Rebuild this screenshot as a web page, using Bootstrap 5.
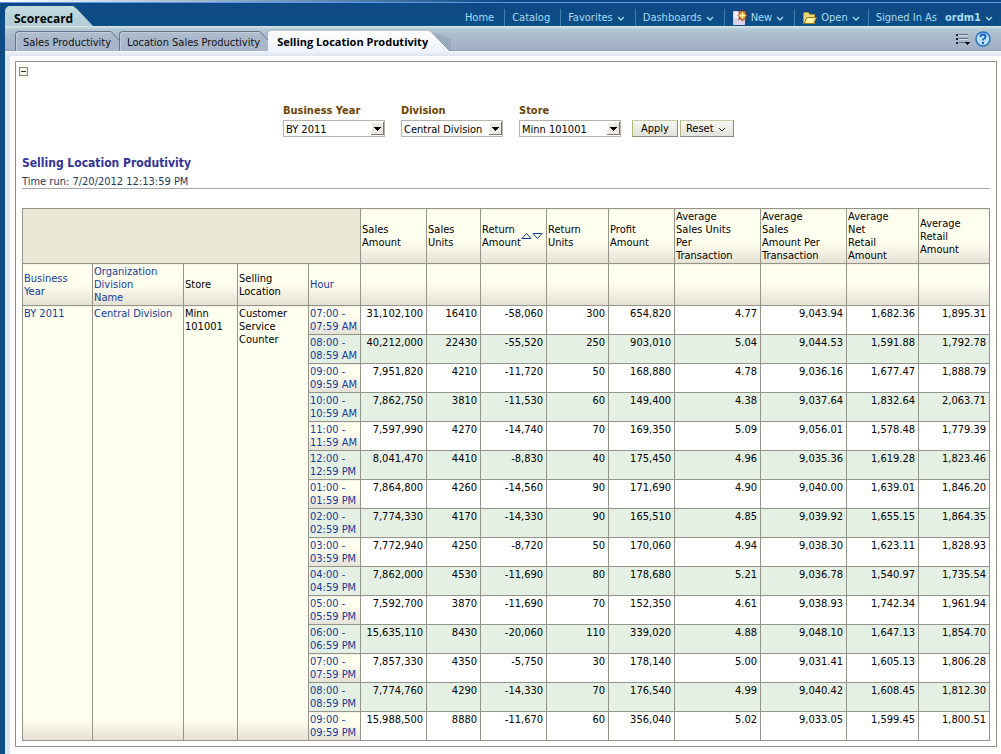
<!DOCTYPE html>
<html lang="en">
<head>
<meta charset="utf-8">
<meta name="viewport" content="width=device-width, initial-scale=1">
<title>Scorecard</title>
<link href="https://cdn.jsdelivr.net/npm/bootstrap@5.3.0/dist/css/bootstrap.min.css" rel="stylesheet">
<style>
body { font: 11px/13px "DejaVu Sans Condensed", "DejaVu Sans", sans-serif; color: #000; background: #fff; }
a { text-decoration: none; }
.shell { background: linear-gradient(90deg, #0d4a86 5px, #fff 5px); min-height: 100vh; }
.topbar { height: 26px; padding-left: 5px;
  background: linear-gradient(90deg, #fff, #0d4a86 50%) 0 0 / 100% 2px no-repeat, linear-gradient(#5b97e8, #5b97e8) 0 2px / 100% 1px no-repeat, linear-gradient(#0d4a86 16px, #0b4f87); }
.board-tab { height: 20px; padding: 0 26px 0 9px; font: bold 12px/25px "Open Sans", "DejaVu Sans", sans-serif; color: #000; border-radius: 5px 0 0 0; background: linear-gradient(#c3dbe0, #b2ccd6); clip-path: polygon(0 0, 68px 0, 72px 3px, 100% 100%, 0 100%); width: 88px; white-space: nowrap; }
.menu-item { height: 17px; line-height: 17px; padding: 0 10px 0 7px; color: #a9dcf0; border: 0; border-left: 1px solid #3f7fab; background: none; white-space: nowrap; display: flex; align-items: center; }
.menu-item.first { border-left: 0; }
.menu-item:hover { color: #fff; }
.tabstrip { height: 25px; margin-left: 5px; padding-left: 10px; background: linear-gradient(#dbe7e9, #b5c9d4 3px, #aabccc 9px, #a3b1c5 23px, #8f9bb3); }
.sub-tab { height: 20px; line-height: 22px; color: #111; border: 1px solid #66758d; border-width: 1px 0 0 1px; border-radius: 4px 0 0 0; background: linear-gradient(#adbccd, #a5b2c8); padding-left: 7px; white-space: nowrap; box-shadow: inset 1px 1px #c3cedb; }
.sub-tab.current { background: linear-gradient(#fff, #eef2f9); border: 0; font: bold 11px/22px "Open Sans", "DejaVu Sans", sans-serif; color: #000; box-shadow: none; padding-left: 9px; }
.under { height: 5px; margin-left: 5px; border-radius: 4px 0 0 0; background: linear-gradient(#f1f4fb, #dbe4f0); }
.strip-tools { padding-right: 10px; }
.content-area { border-left: 5px solid #dde5f1; margin-left: 5px; padding: 5px 4px 7px 5px; }
.report { border: 1px solid #8f8f86; padding: 4px 6px 5px 6px; }
.expander { width: 9px; height: 9px; padding: 0; border: 1px solid #84847a; background: #f6f6e8; display: flex; align-items: center; justify-content: center; margin: 1px 0 0 -3px; }
.prompt-label { font-weight: bold; line-height: 14px; color: #6b4500; display: block; margin-bottom: 2px; }
.prompts { padding: 28px 0 0 261px; }
.prompt-box { width: 102px; height: 17px; padding: 1px 14px 0 2px; font: inherit; border: 1px solid #b4b4aa; border-radius: 0; appearance: none; color: #000;
  background: #fff url("data:image/svg+xml,%3Csvg xmlns='http://www.w3.org/2000/svg' width='13' height='13' shape-rendering='crispEdges'%3E%3Cpath fill='%23eceae2' d='M0 0h13v13H0z'/%3E%3Cpath fill='%23fff' d='M0 0h12v1H1v11H0z'/%3E%3Cpath fill='%23777' d='M12 0h1v13H0v-1h12z'/%3E%3Cpath d='M3 5h7v1H9v1H8v1H7v1H6V8H5V7H4V6H3z'/%3E%3C/svg%3E") no-repeat right 0 top 1px; }
.push { height: 17px; padding: 0 8px; border: 1px solid; border-color: #c9c9a8 #8c8c80 #8c8c80 #b5b57c; background: linear-gradient(#f7f7f2, #e2e2da); line-height: 15px; color: #000; }
.push.reset { padding: 0 6px 0 5px; margin-left: 2px; }
.prompt-actions { margin-left: 11px; }
.report-title { font: bold 12px/16px "DejaVu Sans Condensed", "DejaVu Sans", sans-serif; color: #333399; margin: 18px 0 2px; }
.run-time { color: #1d3a5c; height: 16px; line-height: 17px; border-bottom: 1px solid #a3a7ae; }
.pivot { width: 100%; margin-top: 19px; table-layout: fixed; border-collapse: collapse; }
.pivot th, .pivot td { border: 1px solid #94948a; padding: 1px; font-weight: normal; vertical-align: middle; text-align: left; }
.pivot td { text-align: right; vertical-align: top; padding-right: 3px; background: #fff; }
.pivot th { background: linear-gradient(#fffff0, #fffff0 calc(100% - 22px), #e4e1d4); white-space: nowrap; }
.pivot tbody th { vertical-align: top; }
.pivot th.corner { background: #e9e9d5; }
.pivot th.hour { background: linear-gradient(#fffff0, #fffff0 calc(100% - 18px), #e4e1d6); color: #15399b; }
.pivot tr:nth-child(even) td, .pivot tbody tr:nth-child(even) th.hour { background: #e5f0e4; }
.pivot a { color: #15399b; }
</style>
</head>
<body>
<div class="shell">
  <header class="topbar d-flex align-items-end">
    <a class="board-tab" href="#">Scorecard</a>
    <nav class="d-flex ms-auto align-items-end">
      <a class="menu-item first" href="#">Home</a>
      <a class="menu-item" href="#">Catalog</a>
      <button class="menu-item">Favorites<svg class="ms-1" width="8" height="9"><path d="M1 4l3 3 3-3" fill="none" stroke="#a9dcf0" stroke-width="1.3"/></svg></button>
      <button class="menu-item">Dashboards<svg class="ms-1" width="8" height="9"><path d="M1 4l3 3 3-3" fill="none" stroke="#a9dcf0" stroke-width="1.3"/></svg></button>
      <button class="menu-item"><svg class="me-1" width="15" height="16"><path d="M1.500 1.500h11v13h-11z" fill="#f5f2fb" stroke="#d9cfe8"/><path d="M2 9l10-4v9H2z" fill="#ddd0ea"/><path d="M10.500 0l1.200 2.200 2.600-.7-.8 2.500 1.500 1.500-1.500 1.500.8 2.500-2.600-.7-1.200 2.200-1.200-2.200-2.600.7.8-2.500L6 5.500 7.500 4l-.8-2.500 2.600.7z" fill="#e5a12b" stroke="#8b250e" stroke-width=".8"/><path d="M10.500 2.500v6M7.500 5.500h6" stroke="#fff8a8" stroke-width="1.400"/></svg>New<svg class="ms-1" width="8" height="9"><path d="M1 4l3 3 3-3" fill="none" stroke="#a9dcf0" stroke-width="1.3"/></svg></button>
      <button class="menu-item pe-2"><svg class="me-1" width="15" height="14"><path d="M1.500 12.500v-10l1-1h4l1 2h5v9z" fill="#e9d77a" stroke="#b49a35"/><path d="M2 12.500l3-6h9.500l-3 6z" fill="#fff5a9" stroke="#8f781e"/></svg>Open<svg class="ms-1" width="8" height="9"><path d="M1 4l3 3 3-3" fill="none" stroke="#a9dcf0" stroke-width="1.3"/></svg></button>
      <button class="menu-item pe-2">Signed In As<b class="ms-2">ordm1</b><svg class="ms-1" width="8" height="9"><path d="M1 4l3 3 3-3" fill="none" stroke="#a9dcf0" stroke-width="1.3"/></svg></button>
    </nav>
  </header>
  <div class="tabstrip d-flex align-items-end">
    <a class="sub-tab" href="#">Sales Productivity</a><svg width="8" height="20"><path d="M0 .5L8 9v11H0z" fill="#a8b6ca"/><path d="M0 .5L8 9" stroke="#66758d"/></svg>
    <a class="sub-tab" href="#">Location Sales Productivity</a><svg width="8" height="20"><path d="M0 .5L8 9v11H0z" fill="#a8b6ca"/><path d="M0 .5L8 9" stroke="#66758d"/></svg>
    <a class="sub-tab current" href="#">Selling Location Produtivity</a><svg width="23" height="20"><defs><linearGradient id="g" x2="0" y2="1"><stop stop-color="#fff"/><stop offset="1" stop-color="#eef2f9"/></linearGradient></defs><path d="M4 1l19 19V8z" fill="#8798ac" opacity=".4"/><path d="M0 0q3 0 5 2l17 18H0z" fill="url(#g)"/><path d="M3 .5l19 19.500" stroke="#75879d"/></svg>
    <div class="strip-tools ms-auto align-self-center d-flex align-items-center gap-1">
      <button class="border-0 bg-transparent p-0 d-flex" aria-label="Page options"><svg width="16" height="14" shape-rendering="crispEdges"><path d="M4 2.500h9M4 6.500h9M4 10.500h6" stroke="#666e78"/><path d="M4 3.500h9M4 7.500h9" stroke="#d5dee8"/><path d="M1 2.500h2M1 6.500h2M1 10.500h2" stroke="#223" stroke-width="2"/><path d="M9 10h6l-3 3z"/></svg></button>
      <button class="border-0 bg-transparent p-0 d-flex" aria-label="Help"><svg width="16" height="16"><circle cx="8" cy="8" r="7" fill="#b9e0fb" stroke="#2471c4" stroke-width="1.500"/><path d="M5.500 6q0-2.500 2.500-2.500t2.500 2.200Q10.500 7 9 7.700 8 8.200 8 9.600" fill="none" stroke="#125dbd" stroke-width="1.800"/><path d="M7 11h2v2H7z" fill="#125dbd"/></svg></button>
    </div>
  </div>
  <div class="under"></div>
  <main class="content-area">
    <section class="report">
      <button class="expander" aria-label="Collapse section"><svg width="5" height="1" class="flex-shrink-0"><path d="M0 0h5v1H0z" fill="#333"/></svg></button>
      <form class="prompts d-flex align-items-end">
        <div class="me-3"><label class="prompt-label" for="year">Business Year</label><select class="prompt-box" id="year"><option>BY 2011</option></select></div>
        <div class="me-3"><label class="prompt-label" for="division">Division</label><select class="prompt-box" id="division"><option>Central Division</option></select></div>
        <div><label class="prompt-label" for="store">Store</label><select class="prompt-box" id="store"><option>Minn 101001</option></select></div>
        <div class="prompt-actions d-flex">
          <button type="button" class="push">Apply</button>
          <button type="button" class="push reset">Reset<svg class="ms-1" width="9" height="7"><path d="M1 2l3 3 3-3" fill="none" stroke="#222"/></svg></button>
        </div>
      </form>
      <h1 class="report-title">Selling Location Produtivity</h1>
      <div class="run-time">Time run: 7/20/2012 12:13:59 PM</div>
      <table class="pivot">
        <colgroup><col style="width:70px"><col style="width:91px"><col style="width:54px"><col style="width:71px"><col style="width:52px"><col style="width:66px"><col style="width:54px"><col style="width:66px"><col style="width:62px"><col style="width:66px"><col style="width:86px"><col style="width:86px"><col style="width:72px"><col style="width:71px"></colgroup>
        <thead>
          <tr>
            <th class="corner" colspan="5"></th>
            <th>Sales<br>Amount</th><th>Sales<br>Units</th>
            <th><div class="d-flex align-items-center">Return<br>Amount<svg width="23" height="8"><path d="M1 6.500h9L5.500 1.500zM12 1.500h9l-4.500 5z" fill="none" stroke="#15399b"/></svg></div></th>
            <th>Return<br>Units</th><th>Profit<br>Amount</th>
            <th>Average<br>Sales Units<br>Per<br>Transaction</th><th>Average<br>Sales<br>Amount Per<br>Transaction</th>
            <th>Average<br>Net<br>Retail<br>Amount</th><th>Average<br>Retail<br>Amount</th>
          </tr>
          <tr>
            <th><a href="#">Business<br>Year</a></th><th><a href="#">Organization<br>Division<br>Name</a></th><th>Store</th><th>Selling<br>Location</th><th><a href="#">Hour</a></th>
            <th></th><th></th><th></th><th></th><th></th><th></th><th></th><th></th><th></th>
          </tr>
        </thead>
        <tbody id="rows"></tbody>
      </table>
    </section>
  </main>
</div>
<script>
const data = `07:00 AM|31,102,100|16410|-58,060|300|654,820|4.77|9,043.94|1,682.36|1,895.31
08:00 AM|40,212,000|22430|-55,520|250|903,010|5.04|9,044.53|1,591.88|1,792.78
09:00 AM|7,951,820|4210|-11,720|50|168,880|4.78|9,036.16|1,677.47|1,888.79
10:00 AM|7,862,750|3810|-11,530|60|149,400|4.38|9,037.64|1,832.64|2,063.71
11:00 AM|7,597,990|4270|-14,740|70|169,350|5.09|9,056.01|1,578.48|1,779.39
12:00 PM|8,041,470|4410|-8,830|40|175,450|4.96|9,035.36|1,619.28|1,823.46
01:00 PM|7,864,800|4260|-14,560|90|171,690|4.90|9,040.00|1,639.01|1,846.20
02:00 PM|7,774,330|4170|-14,330|90|165,510|4.85|9,039.92|1,655.15|1,864.35
03:00 PM|7,772,940|4250|-8,720|50|170,060|4.94|9,038.30|1,623.11|1,828.93
04:00 PM|7,862,000|4530|-11,690|80|178,680|5.21|9,036.78|1,540.97|1,735.54
05:00 PM|7,592,700|3870|-11,690|70|152,350|4.61|9,038.93|1,742.34|1,961.94
06:00 PM|15,635,110|8430|-20,060|110|339,020|4.88|9,048.10|1,647.13|1,854.70
07:00 PM|7,857,330|4350|-5,750|30|178,140|5.00|9,031.41|1,605.13|1,806.28
08:00 PM|7,774,760|4290|-14,330|70|176,540|4.99|9,040.42|1,608.45|1,812.30
09:00 PM|15,988,500|8880|-11,670|60|356,040|5.02|9,033.05|1,599.45|1,800.51`.split("\n");
document.getElementById("rows").innerHTML = data.map((line, i) => {
  const [time, ...values] = line.split("|");
  const lead = i ? "" : `<th rowspan="15"><a href="#">BY 2011</a></th><th rowspan="15"><a href="#">Central Division</a></th><th rowspan="15">Minn<br>101001</th><th rowspan="15">Customer<br>Service<br>Counter</th>`;
  return `<tr>${lead}<th class="hour">${time.slice(0, 5)} -<br>${time.slice(0, 3)}59${time.slice(5)}</th>${values.map(v => `<td>${v}</td>`).join("")}</tr>`;
}).join("");
</script>
<script src="https://cdn.jsdelivr.net/npm/bootstrap@5.3.0/dist/js/bootstrap.bundle.min.js"></script>
</body>
</html>
